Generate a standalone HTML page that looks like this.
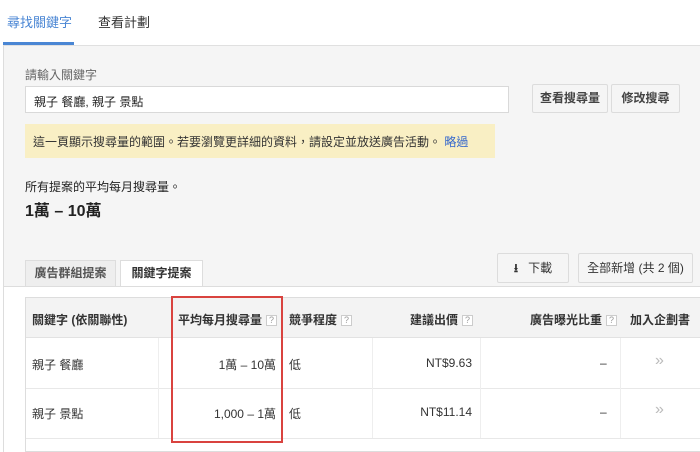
<!DOCTYPE html><html><head><meta charset="utf-8"><style>
*{margin:0;padding:0;box-sizing:border-box}
body{width:700px;height:452px;overflow:hidden;background:#fff;font-family:"Liberation Sans","Noto Sans CJK TC",sans-serif;font-size:12px;color:#222;position:relative}
.a{position:absolute}
.btn{position:absolute;background:#f5f5f5;border:1px solid #dcdcdc;border-radius:2px;font-weight:bold;color:#444;text-align:center;font-size:12px}
.q{display:inline-block;width:11px;height:11px;border:1px solid #ccc;background:#fff;color:#999;font-size:9px;line-height:9px;text-align:center;font-weight:normal;vertical-align:middle;margin-left:4px}
.hd{position:absolute;top:311px;font-weight:bold;color:#333;font-size:12px}
.c{position:absolute;font-size:12px;color:#333}
</style></head><body>
<div class="a" style="left:7px;top:12px;color:#4a86d4;font-size:13px">尋找關鍵字</div>
<div class="a" style="left:98px;top:12px;color:#333;font-size:13px">查看計劃</div>
<div class="a" style="left:3px;top:42px;width:71px;height:3px;background:#4a86d4"></div>
<div class="a" style="left:0;top:45px;width:700px;height:241px;background:#f5f5f5;border-top:1px solid #e0e0e0;border-left:1px solid #ddd;margin-left:3px"></div>
<div class="a" style="left:25px;top:66px;color:#666;font-size:12px">請輸入關鍵字</div>
<div class="a" style="left:25px;top:86px;width:484px;height:27px;background:#fff;border:1px solid #d9d9d9;padding:6px 8px;font-size:12px">親子 餐廳, 親子 景點</div>
<div class="btn" style="left:532px;top:84px;width:76px;height:29px;line-height:27px">查看搜尋量</div>
<div class="btn" style="left:611px;top:84px;width:69px;height:29px;line-height:27px">修改搜尋</div>
<div class="a" style="left:25px;top:124px;width:470px;height:34px;background:#f9efc4;padding:9px 8px;font-size:12px;color:#333">這一頁顯示搜尋量的範圍。若要瀏覽更詳細的資料，請設定並放送廣告活動。 <span style="color:#3366cc">略過</span></div>
<div class="a" style="left:25px;top:178px;font-size:12px">所有提案的平均每月搜尋量。</div>
<div class="a" style="left:25px;top:197px;font-size:16px;font-weight:bold">1萬 – 10萬</div>
<div class="a" style="left:25px;top:260px;width:91px;height:26px;background:#eee;border:1px solid #ddd;border-bottom:none;text-align:center;line-height:25px;font-weight:bold;color:#555;font-size:12px">廣告群組提案</div>
<div class="a" style="left:120px;top:260px;width:83px;height:27px;background:#fff;border:1px solid #ddd;border-bottom:none;text-align:center;line-height:25px;font-weight:bold;color:#333;font-size:12px">關鍵字提案</div>
<div class="btn" style="left:497px;top:253px;width:72px;height:30px;line-height:28px;font-weight:normal;color:#333"><b>⭳</b>&nbsp;&nbsp; 下載</div>
<div class="btn" style="left:578px;top:253px;width:115px;height:30px;line-height:28px;font-weight:normal;color:#333">全部新增 (共 2 個)</div>
<div class="a" style="left:3px;top:286px;width:697px;height:1px;background:#ddd"></div>
<div class="a" style="left:3px;top:286px;width:1px;height:166px;background:#ddd"></div>
<div class="a" style="left:25px;top:297px;width:680px;height:155px;border:1px solid #ddd;background:#fff"></div>
<div class="a" style="left:26px;top:298px;width:674px;height:40px;background:#f3f3f3;border-bottom:1px solid #e2e2e2"></div>
<div class="a" style="left:26px;top:388px;width:674px;height:1px;background:#e8e8e8"></div>
<div class="a" style="left:26px;top:438px;width:674px;height:1px;background:#e8e8e8"></div>
<div class="a" style="left:158px;top:338px;width:1px;height:100px;background:#eee"></div>
<div class="a" style="left:372px;top:338px;width:1px;height:100px;background:#eee"></div>
<div class="a" style="left:480px;top:338px;width:1px;height:100px;background:#eee"></div>
<div class="a" style="left:620px;top:338px;width:1px;height:100px;background:#eee"></div>
<div class="hd" style="left:32px">關鍵字 (依關聯性)</div>
<div class="hd" style="left:178px">平均每月搜尋量<span class="q">?</span></div>
<div class="hd" style="left:289px">競爭程度<span class="q">?</span></div>
<div class="hd" style="left:410px">建議出價<span class="q">?</span></div>
<div class="hd" style="left:530px">廣告曝光比重<span class="q">?</span></div>
<div class="hd" style="left:630px">加入企劃書</div>
<div class="c" style="left:32px;top:356px">親子 餐廳</div>
<div class="c" style="left:170px;top:356px;width:106px;text-align:right">1萬 – 10萬</div>
<div class="c" style="left:289px;top:356px">低</div>
<div class="c" style="left:380px;top:356px;width:92px;text-align:right">NT$9.63</div>
<div class="c" style="left:600px;top:356px">–</div>
<div class="c" style="left:655px;top:352px;color:#bbb;font-size:16px">»</div>
<div class="c" style="left:32px;top:405px">親子 景點</div>
<div class="c" style="left:170px;top:405px;width:106px;text-align:right">1,000 – 1萬</div>
<div class="c" style="left:289px;top:405px">低</div>
<div class="c" style="left:380px;top:405px;width:92px;text-align:right">NT$11.14</div>
<div class="c" style="left:600px;top:405px">–</div>
<div class="c" style="left:655px;top:401px;color:#bbb;font-size:16px">»</div>
<div class="a" style="left:171px;top:296px;width:112px;height:147px;border:2px solid #d9433f"></div>
</body></html>
